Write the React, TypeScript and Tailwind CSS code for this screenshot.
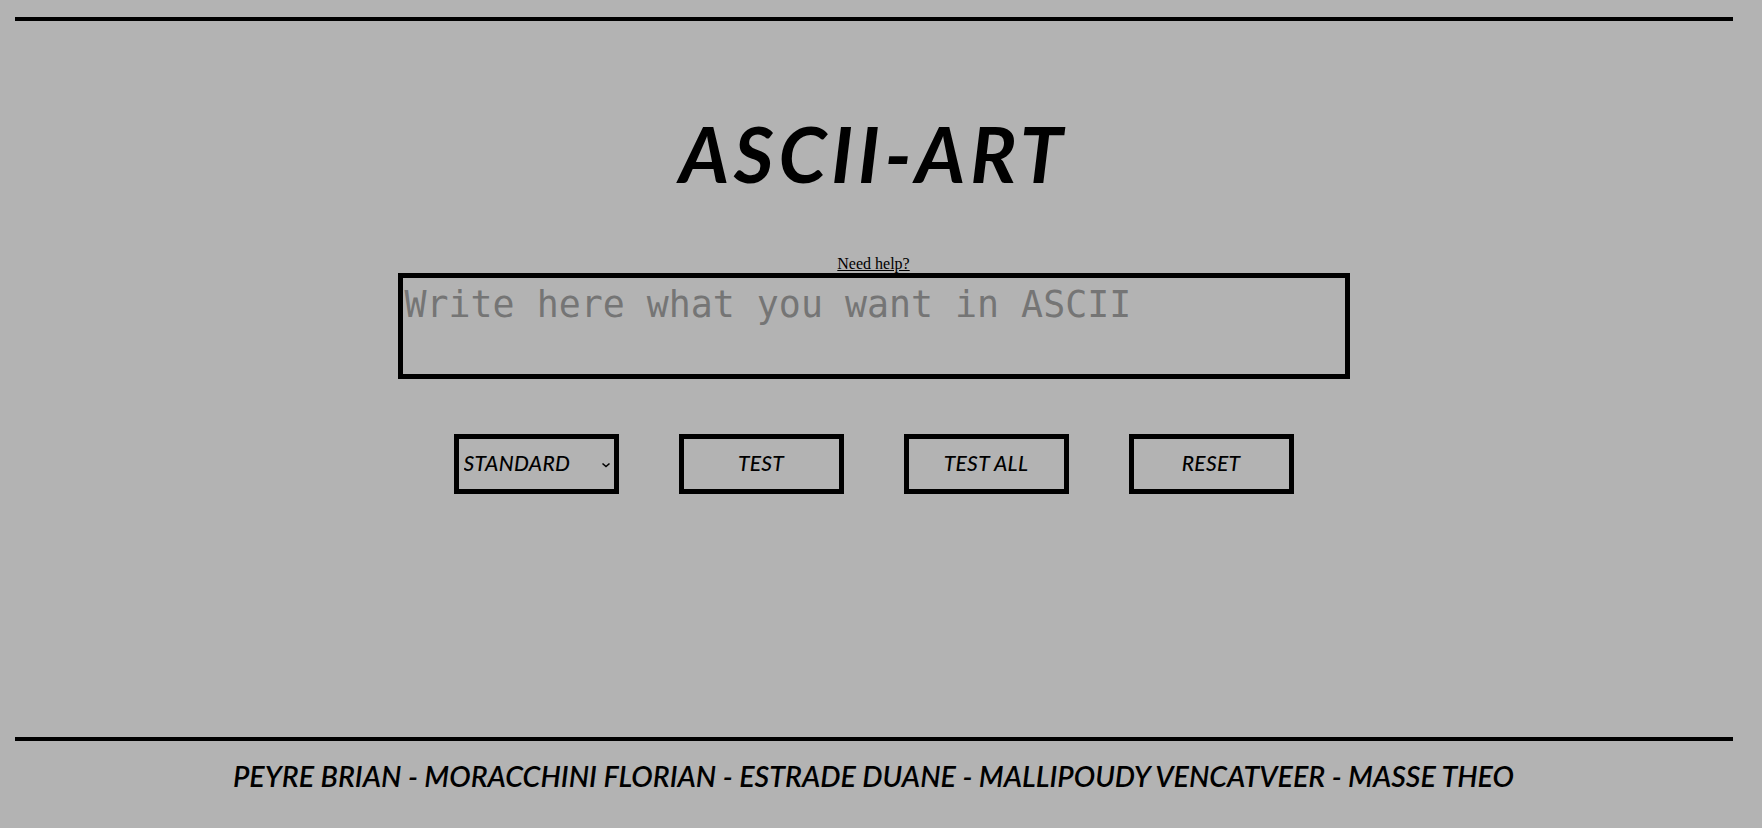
import React from "react"

const names = [
    "PEYRE BRIAN",
    "MORACCHINI FLORIAN",
    "ESTRADE DUANE",
    "MALLIPOUDY VENCATVEER",
    "MASSE THEO",
]

const Chevron = () => (
    <svg
        width="10"
        height="6"
        viewBox="0 0 10 6"
        className="absolute right-[3px] top-[23px] pointer-events-none"
    >
        <path d="M1.5 1.5 L5 4.5 L8.5 1.5" fill="none" stroke="#000" strokeWidth="1.6" />
    </svg>
)

const BoxButton = ({ label }: { label: string }) => {
    return (
        <button className="w-[165px] h-[60px] border-[5px] border-black bg-transparent pb-[2px] text-[21px] font-medium italic tracking-[0.3px] text-black cursor-pointer">
            {label}
        </button>
    )
}

const App = () => {
    return (
        <div className="w-full min-h-screen bg-[#b3b3b3] font-['Lato',sans-serif]">
            <div className="w-[1747px] flex flex-col items-center">
                <div className="self-stretch ml-[15px] mr-[14px] mt-[17px] h-[4px] bg-black" />

                <h1 className="mt-[94px] text-[77px] leading-none font-bold italic tracking-[5px] text-black">
                    ASCII-ART
                </h1>

                <a
                    href="#"
                    className="mt-[64px] text-[16px] leading-[15px] underline text-black font-['Liberation_Serif',serif]"
                >
                    Need help?
                </a>

                <textarea
                    placeholder="Write here what you want in ASCII"
                    className="block mt-[2px] w-[952px] h-[106px] border-[5px] border-black bg-transparent resize-none outline-none px-[2px] pt-[5px] text-[36.6px] leading-[43px] font-['DejaVu_Sans_Mono',monospace] text-black placeholder:text-[#757575]"
                />

                <div className="mt-[55px] flex gap-[60px]">
                    <div className="relative w-[165px] h-[60px] border-[5px] border-black">
                        <select className="w-full h-full appearance-none bg-transparent outline-none pl-[5px] pb-[2px] text-[21px] font-medium italic tracking-[0.3px] text-black cursor-pointer">
                            <option>STANDARD</option>
                            <option>SHADOW</option>
                            <option>THINKERTOY</option>
                        </select>
                        <Chevron />
                    </div>
                    <BoxButton label="TEST" />
                    <BoxButton label="TEST ALL" />
                    <BoxButton label="RESET" />
                </div>

                <div className="self-stretch ml-[15px] mr-[14px] mt-[243px] h-[4px] bg-black" />

                <footer className="mt-[21px] text-[28.6px] leading-none font-semibold italic text-black">
                    {names.join(" - ")}
                </footer>
            </div>
        </div>
    )
}

export default App
